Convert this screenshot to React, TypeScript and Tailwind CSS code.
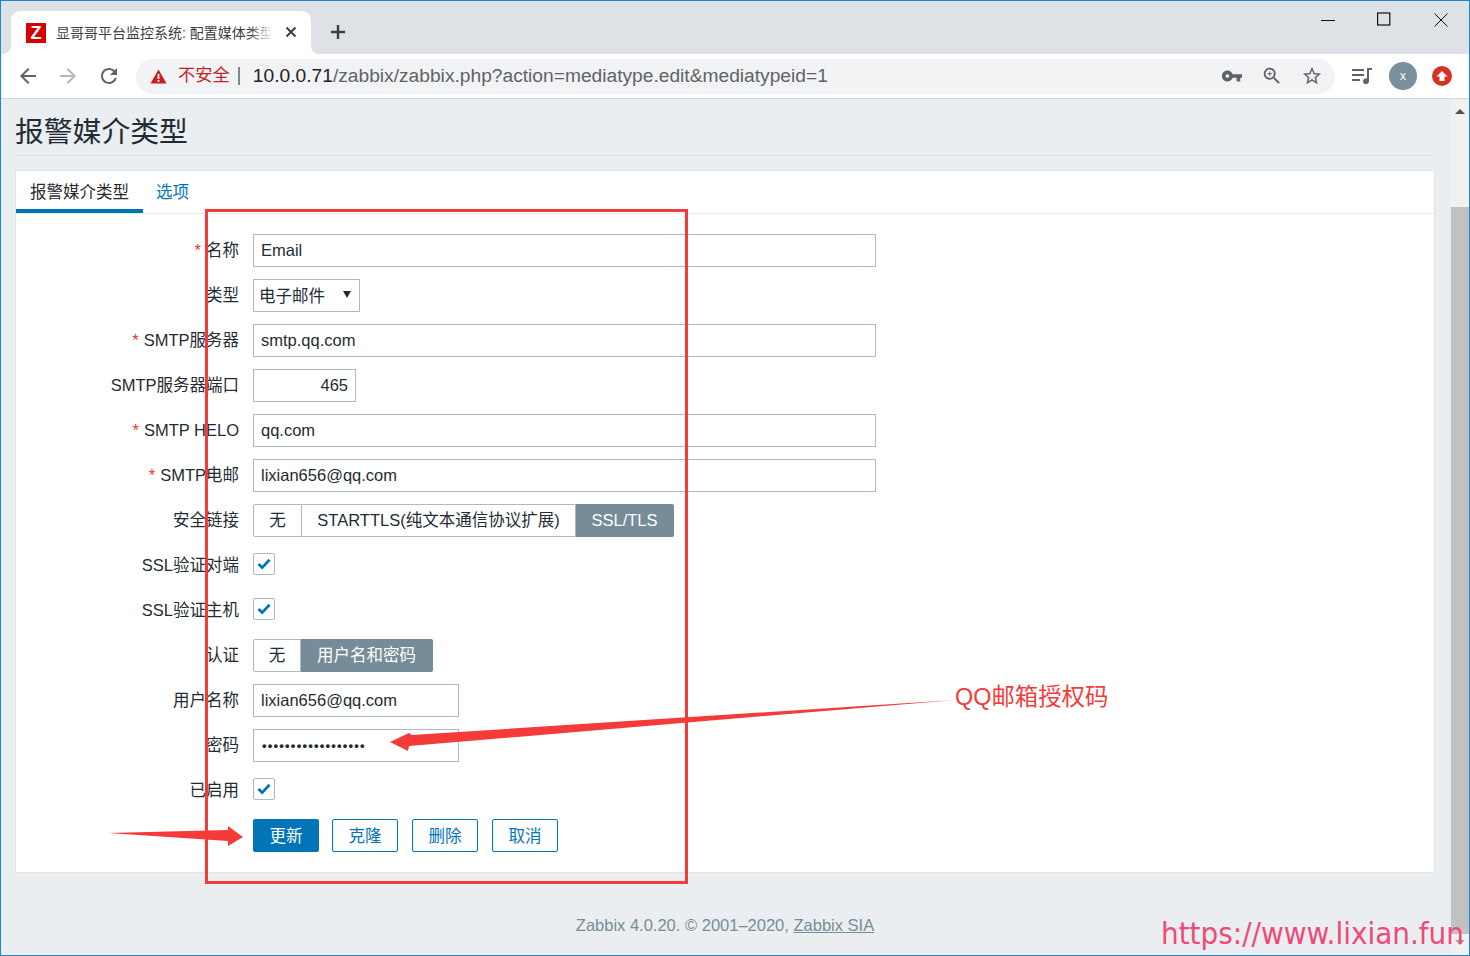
import { ReactNode } from "react";

const FONT = "font-['Liberation_Sans','Noto_Sans_CJK_SC',sans-serif]";

const Field = ({ label, required, children }: { label: string; required?: boolean; children: ReactNode }) => (
    <div className="flex items-center h-[33px] mb-[12px]">
        <div className="w-[237px] pr-[14px] text-right whitespace-nowrap">
            {required && <span className="text-[#e33734] mr-[5px]">*</span>}
            {label}
        </div>
        {children}
    </div>
);

const TextBox = ({ value, width, right }: { value: string; width: string; right?: boolean }) => (
    <div className={`h-[33px] border border-[#acbbc2] bg-white px-[7px] leading-[31px] ${width} ${right ? "text-right" : ""}`}>{value}</div>
);

const Check = () => (
    <div className="w-[22px] h-[22px] mb-[3px] border border-[#acbbc2] rounded-[2px] bg-white flex items-center justify-center">
        <svg width="14" height="12" viewBox="0 0 14 12" fill="none">
            <path d="M1.5 6 L5.2 9.6 L12.5 1.8" stroke="#0275b8" strokeWidth="2.8" />
        </svg>
    </div>
);

const Radio = ({ items }: { items: { label: string; width: string; on?: boolean }[] }) => (
    <div className="flex h-[33px]">
        {items.map((item, i) => (
            <div
                key={item.label}
                className={`${item.width} h-[33px] flex items-center justify-center border whitespace-nowrap ${
                    item.on ? "bg-[#768d99] border-[#768d99] text-white" : "bg-white border-[#acbbc2]"
                } ${i === 0 ? "rounded-l-[2px]" : "border-l-0"} ${i === items.length - 1 ? "rounded-r-[2px]" : ""}`}
            >
                {item.label}
            </div>
        ))}
    </div>
);

const Icon = ({ d, size = 24, color = "#5f6368" }: { d: string; size?: number; color?: string }) => (
    <svg width={size} height={size} viewBox="0 0 24 24" fill={color}>
        <path d={d} />
    </svg>
);

const BrowserChrome = () => (
    <>
        <div className="h-[53px] bg-[#dee1e6] flex shrink-0">
            <div className="relative ml-[10px] mt-[10px] w-[300px] h-[43px] bg-white rounded-t-[9px] flex items-center pl-[15px]">
                <div className="absolute -left-[8px] bottom-0 w-[8px] h-[8px] bg-white">
                    <div className="w-[8px] h-[8px] bg-[#dee1e6] rounded-br-[8px]" />
                </div>
                <div className="absolute -right-[8px] bottom-0 w-[8px] h-[8px] bg-white">
                    <div className="w-[8px] h-[8px] bg-[#dee1e6] rounded-bl-[8px]" />
                </div>
                <div className="w-[20px] h-[20px] bg-[#d40000] text-white font-bold text-[18px] leading-[20px] text-center shrink-0">Z</div>
                <div className="relative ml-[10px] w-[217px] overflow-hidden whitespace-nowrap text-[14px] leading-[20px] pt-[1px] text-[#3c4043]">
                    显哥哥平台监控系统: 配置媒体类型
                    <div className="absolute right-0 top-0 h-full w-[24px] bg-gradient-to-r from-transparent to-white" />
                </div>
                <svg className="ml-[12px] -mt-[1px]" width="12" height="12" viewBox="0 0 12 12" stroke="#3c4043" strokeWidth="2">
                    <path d="M1.5 1.5 L10.5 10.5 M10.5 1.5 L1.5 10.5" />
                </svg>
            </div>
            <div className="ml-[19px] mt-[23px]">
                <svg width="16" height="16" viewBox="0 0 16 16" stroke="#3c4043" strokeWidth="2.4">
                    <path d="M8 1 V15 M1 8 H15" />
                </svg>
            </div>
            <div className="ml-auto flex items-start pt-[10px] pr-[21px]">
                <svg width="14" height="14" viewBox="0 0 14 14" stroke="#111" strokeWidth="1" className="mt-[1px]">
                    <path d="M0 8.5 H14" />
                </svg>
                <svg width="14" height="14" viewBox="0 0 14 14" stroke="#111" strokeWidth="1.2" fill="none" className="ml-[42px] mt-[1px]">
                    <rect x="0.6" y="1" width="12.2" height="12" />
                </svg>
                <svg width="14" height="14" viewBox="0 0 14 14" stroke="#111" strokeWidth="1" className="ml-[43px] mt-[2px]">
                    <path d="M0.5 0.5 L13.5 13.5 M13.5 0.5 L0.5 13.5" />
                </svg>
            </div>
        </div>
        <div className="h-[45px] bg-white border-b border-[#d5d8dc] flex items-center shrink-0">
            <div className="ml-[15px]">
                <Icon d="M20 11H7.83l5.59-5.59L12 4l-8 8 8 8 1.41-1.41L7.83 13H20v-2z" />
            </div>
            <div className="ml-[16px]">
                <Icon d="M12 4l-1.41 1.41L16.17 11H4v2h12.17l-5.58 5.59L12 20l8-8z" color="#b4b7bb" />
            </div>
            <div className="ml-[17px]">
                <Icon d="M17.65 6.35C16.2 4.9 14.21 4 12 4c-4.42 0-7.99 3.58-7.99 8s3.57 8 7.99 8c3.73 0 6.84-2.55 7.73-6h-2.08c-.82 2.33-3.04 4-5.65 4-3.31 0-6-2.69-6-6s2.69-6 6-6c1.66 0 3.14.69 4.22 1.78L13 11h7V4l-2.35 2.35z" />
            </div>
            <div className="ml-[15px] w-[1199px] h-[35px] rounded-full bg-[#f1f3f4] flex items-center pl-[14px] pr-[12px]">
                <svg width="17" height="15" viewBox="0 0 17 15">
                    <path d="M8.5 0.5 L16.5 14.5 H0.5 Z" fill="#c5221f" />
                    <path d="M7.6 5 H9.4 V10 H7.6 Z M7.6 11 H9.4 V12.8 H7.6 Z" fill="#fff" />
                </svg>
                <span className="ml-[11px] text-[17.3px] text-[#c5221f]">不安全</span>
                <span className="ml-[8px] w-[2px] h-[18px] bg-[#80868b]" />
                <span className="ml-[13px] text-[19.2px] whitespace-nowrap text-[#5f6368]">
                    <span className="text-[#202124]">10.0.0.71</span>/zabbix/zabbix.php?action=mediatype.edit&amp;mediatypeid=1
                </span>
                <div className="ml-auto flex items-center gap-[18px]">
                    <Icon size={22} d="M12.65 10C11.83 7.67 9.61 6 7 6c-3.31 0-6 2.69-6 6s2.69 6 6 6c2.61 0 4.83-1.67 5.65-4H17v4h4v-4h2v-4H12.65zM7 14c-1.1 0-2-.9-2-2s.9-2 2-2 2 .9 2 2-.9 2-2 2z" />
                    <Icon size={22} d="M15.5 14h-.79l-.28-.27C15.41 12.59 16 11.11 16 9.5 16 5.91 13.09 3 9.5 3S3 5.91 3 9.5 5.91 16 9.5 16c1.61 0 3.09-.59 4.23-1.57l.27.28v.79l5 4.99L20.49 19l-4.99-5zm-6 0C7.01 14 5 11.99 5 9.5S7.01 5 9.5 5 14 7.01 14 9.5 11.99 14 9.5 14zM10 7H9v2H7v1h2v2h1v-2h2V9h-2z" />
                    <Icon size={22} d="M22 9.24l-7.19-.62L12 2 9.19 8.63 2 9.24l5.46 4.73L5.82 21 12 17.27 18.18 21l-1.63-7.03L22 9.24zM12 15.4l-3.76 2.27 1-4.28-3.32-2.88 4.38-.38L12 6.1l1.71 4.04 4.38.38-3.32 2.88 1 4.28L12 15.4z" />
                </div>
            </div>
            <svg className="ml-[16px]" width="22" height="18" viewBox="0 0 22 18" fill="#5f6368">
                <path d="M1 2 H13 V4 H1 Z M1 7 H13 V9 H1 Z M1 12 H9 V14 H1 Z M16 1 H21 V3 H18 V14 A3 3 0 1 1 16 11.5 Z" />
            </svg>
            <div className="ml-[16px] w-[28px] h-[28px] rounded-full bg-[#78909c] text-white text-[12px] flex items-center justify-center">x</div>
            <div className="ml-[15px] w-[20px] h-[20px] rounded-full bg-[#d93025] flex items-center justify-center">
                <svg width="12" height="12" viewBox="0 0 12 12" fill="#fff">
                    <path d="M6 1 L11.5 6.5 H8.5 V11 H3.5 V6.5 H0.5 Z" />
                </svg>
            </div>
        </div>
    </>
);

const MediaForm = () => (
    <div className="pt-[20px] pb-[21px]">
        <Field label="名称" required>
            <TextBox value="Email" width="w-[623px]" />
        </Field>
        <Field label="类型">
            <div className="relative h-[33px] w-[107px] border border-[#acbbc2] pl-[5px] leading-[33px]">
                电子邮件
                <span className="absolute right-[8px] top-[11px] w-0 h-0 border-x-[4px] border-x-transparent border-t-[7px] border-t-[#1f2c33]" />
            </div>
        </Field>
        <Field label="SMTP服务器" required>
            <TextBox value="smtp.qq.com" width="w-[623px]" />
        </Field>
        <Field label="SMTP服务器端口">
            <TextBox value="465" width="w-[103px]" right />
        </Field>
        <Field label="SMTP HELO" required>
            <TextBox value="qq.com" width="w-[623px]" />
        </Field>
        <Field label="SMTP电邮" required>
            <TextBox value="lixian656@qq.com" width="w-[623px]" />
        </Field>
        <Field label="安全链接">
            <Radio
                items={[
                    { label: "无", width: "w-[49px]" },
                    { label: "STARTTLS(纯文本通信协议扩展)", width: "w-[274px]" },
                    { label: "SSL/TLS", width: "w-[98px]", on: true },
                ]}
            />
        </Field>
        <Field label="SSL验证对端">
            <Check />
        </Field>
        <Field label="SSL验证主机">
            <Check />
        </Field>
        <Field label="认证">
            <Radio
                items={[
                    { label: "无", width: "w-[48px]" },
                    { label: "用户名和密码", width: "w-[132px]", on: true },
                ]}
            />
        </Field>
        <Field label="用户名称">
            <TextBox value="lixian656@qq.com" width="w-[206px]" />
        </Field>
        <Field label="密码">
            <div className="h-[33px] w-[206px] border border-[#acbbc2] pl-[8px] leading-[31px] text-[13px] tracking-[1.22px] font-bold">
                ••••••••••••••••••
            </div>
        </Field>
        <Field label="已启用">
            <Check />
        </Field>
        <div className="flex h-[33px] pl-[237px]">
            <button className="w-[66px] h-[33px] mr-[13px] pt-[1px] rounded-[2px] bg-[#0275b8] text-white">更新</button>
            {["克隆", "删除", "取消"].map((label) => (
                <button key={label} className="w-[66px] h-[33px] mr-[14px] pt-[1px] rounded-[2px] border border-[#0275b8] text-[#0275b8]">
                    {label}
                </button>
            ))}
        </div>
    </div>
);

export default function App() {
    return (
        <div className={`relative w-[1470px] h-[956px] overflow-hidden border border-[#1a87d9] flex flex-col bg-[#ebeef0] ${FONT} text-[16.5px] text-[#1f2c33]`}>
            <BrowserChrome />
            <div className="flex flex-1 min-h-0">
                <div className="flex-1 pl-[14px] pr-[16px]">
                    <h1 className="h-[57px] pt-[16px] text-[28.8px] leading-[34px] font-normal border-b border-[#dfe4e7]">报警媒介类型</h1>
                    <div className="mt-[14px] bg-white border border-[#dfe4e7] h-[703px]">
                        <div className="h-[43px] flex border-b border-[#e6e9eb]">
                            <div className="w-[127px] h-[42px] border-b-[4px] border-[#0275b8] pl-[14px] pt-[9px]">报警媒介类型</div>
                            <div className="ml-[13px] pt-[9px] text-[#0275b8]">选项</div>
                        </div>
                        <MediaForm />
                    </div>
                    <div className="mt-[40px] text-center text-[#768d99]">
                        Zabbix 4.0.20. © 2001–2020, <span className="underline">Zabbix SIA</span>
                    </div>
                </div>
                <div className="w-[18px] bg-[#f1f1f1] flex flex-col items-center">
                    <div className="mt-[10px] w-0 h-0 border-x-[5px] border-x-transparent border-b-[5px] border-b-[#505050]" />
                    <div className="mt-[93px] w-full h-[727px] bg-[#c1c1c1]" />
                    <div className="mt-[6px] w-0 h-0 border-x-[5px] border-x-transparent border-t-[5px] border-t-[#a3a3a3]" />
                </div>
            </div>

            {/* annotations drawn on top of the screenshot */}
            <svg className="absolute -left-px -top-px pointer-events-none" width="1470" height="956" viewBox="0 0 1470 956">
                <rect x="206.5" y="210.5" width="480" height="672" fill="none" stroke="#f53a3a" strokeWidth="3" />
                <polygon points="955,700 412,735 409,733 390,742 408,751 409,746 " fill="#f53a3a" />
                <polygon points="108,833 228,830 228,826 243,837 228,846 228,841" fill="#f53a3a" />
            </svg>
            <div className="absolute left-[954px] top-[680px] text-[23.4px] leading-[32px] text-[#f63a3a] whitespace-nowrap">QQ邮箱授权码</div>
            <div className="absolute left-[1160px] top-[911px] font-['DejaVu_Sans',sans-serif] [font-stretch:condensed] text-[31px] leading-[42px] text-[#ef4a77] whitespace-nowrap">https://www.lixian.fun</div>
        </div>
    );
}
